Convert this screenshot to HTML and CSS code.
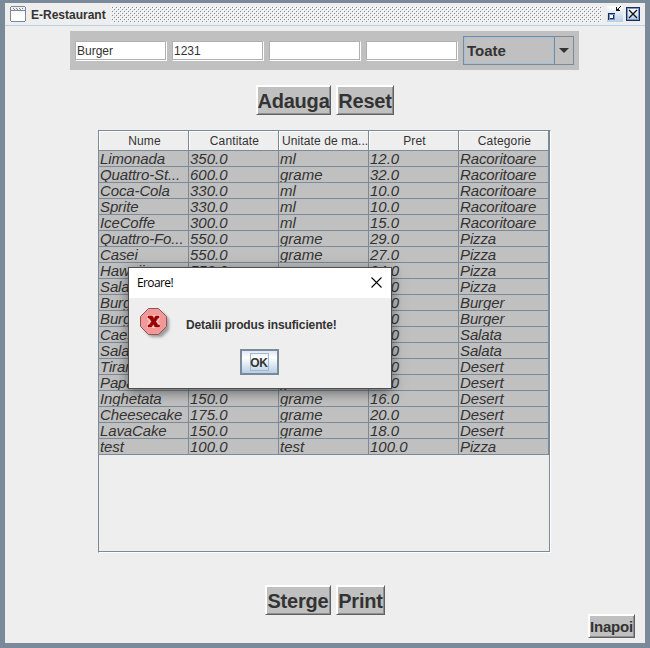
FILE: index.html
```html
<!DOCTYPE html>
<html lang="ro">
<head>
<meta charset="utf-8">
<title>E-Restaurant</title>
<link rel="stylesheet" href="styles.css">
</head>
<body>
<div class="window">
  <header class="titlebar">
    <svg class="app-icon" width="16" height="16" shape-rendering="crispEdges"><path fill="#7a8a99" d="M1 0h14v1h1v14h-1v1H1v-1H0V1h1z"/><path fill="#eee" d="M1 1h14v3H1z"/><path fill="#fff" d="M1 5h14v10H1z"/><path fill="#7a8a99" d="M3 2h1v1H3zM6 2h1v1H6zM9 2h1v1H9zM12 2h1v1h-1zM4 3h1v1H4zM7 3h1v1H7zM10 3h1v1h-1z"/></svg>
    <h1>E-Restaurant</h1>
    <svg class="bumps" width="491" height="17" shape-rendering="crispEdges"><defs><pattern id="bump" width="4" height="4" patternUnits="userSpaceOnUse"><path fill="#fff" d="M0 0h1v1H0zM2 2h1v1H2z"/><path fill="#7a8a99" d="M1 1h1v1H1zM3 3h1v1H3z"/></pattern></defs><rect width="491" height="17" fill="url(#bump)"/></svg>
    <svg class="win-icons" width="34" height="16" shape-rendering="crispEdges"><defs><linearGradient id="ice" x2="0" y2="1"><stop stop-color="#fff"/><stop offset="1" stop-color="#b8cfe5"/></linearGradient></defs><path fill="url(#ice)" d="M0 0h16v16H0z"/><path fill="#1b2b57" d="M1 7h7v7H1z"/><path fill="#7a96d0" d="M2 8h6v6H2z"/><path fill="#1b2b57" d="M3 9h4v4H3z"/><path fill="#fff" d="M3 9h3v3H3z"/><path fill="#111" d="M9 1h1v4H9zM9 4h4v1H9zM10 3h2v1h-2zM11 2h1v1h-1zM12 1h1v1h-1zM13 0h1v1h-1z"/><path fill="#1b2b57" d="M19 1h14v14H19z"/><path fill="#7a96d0" d="M20 2h12v12H20z"/><path fill="url(#ice)" d="M21 3h10v10H21z"/><path d="M22 4l8 8M30 4l-8 8" stroke="#111" stroke-width="1.3" shape-rendering="auto"/></svg>
  </header>
  <main>
    <section class="form">
      <div class="field">Burger</div><div class="field">1231</div><div class="field"></div><div class="field"></div>
      <div class="combo"><span>Toate</span><i><svg width="10" height="5"><path d="M0 0h10L5 5z" fill="#333"/></svg></i></div>
    </section>
    <div class="actions"><button class="adauga">Adauga</button><button class="reset">Reset</button></div>
    <div class="scroll">
      <table>
        <thead><tr><th>Nume</th><th>Cantitate</th><th class="unit">Unitate de ma...</th><th>Pret</th><th>Categorie</th></tr></thead>
        <tbody>
          <tr><td>Limonada</td><td>350.0</td><td>ml</td><td>12.0</td><td>Racoritoare</td></tr>
          <tr><td>Quattro-St...</td><td>600.0</td><td>grame</td><td>32.0</td><td>Racoritoare</td></tr>
          <tr><td>Coca-Cola</td><td>330.0</td><td>ml</td><td>10.0</td><td>Racoritoare</td></tr>
          <tr><td>Sprite</td><td>330.0</td><td>ml</td><td>10.0</td><td>Racoritoare</td></tr>
          <tr><td>IceCoffe</td><td>300.0</td><td>ml</td><td>15.0</td><td>Racoritoare</td></tr>
          <tr><td>Quattro-Fo...</td><td>550.0</td><td>grame</td><td>29.0</td><td>Pizza</td></tr>
          <tr><td>Casei</td><td>550.0</td><td>grame</td><td>27.0</td><td>Pizza</td></tr>
          <tr><td>Hawaii</td><td>550.0</td><td>grame</td><td>24.0</td><td>Pizza</td></tr>
          <tr><td>Salami</td><td>550.0</td><td>grame</td><td>25.0</td><td>Pizza</td></tr>
          <tr><td>Burger</td><td>350.0</td><td>grame</td><td>20.0</td><td>Burger</td></tr>
          <tr><td>Burger</td><td>350.0</td><td>grame</td><td>20.0</td><td>Burger</td></tr>
          <tr><td>Caesar</td><td>300.0</td><td>grame</td><td>20.0</td><td>Salata</td></tr>
          <tr><td>Salata</td><td>300.0</td><td>grame</td><td>20.0</td><td>Salata</td></tr>
          <tr><td>Tiramisu</td><td>150.0</td><td>grame</td><td>20.0</td><td>Desert</td></tr>
          <tr><td>Papanasi</td><td>150.0</td><td>grame</td><td>20.0</td><td>Desert</td></tr>
          <tr><td>Inghetata</td><td>150.0</td><td>grame</td><td>16.0</td><td>Desert</td></tr>
          <tr><td>Cheesecake</td><td>175.0</td><td>grame</td><td>20.0</td><td>Desert</td></tr>
          <tr><td>LavaCake</td><td>150.0</td><td>grame</td><td>18.0</td><td>Desert</td></tr>
          <tr><td>test</td><td>100.0</td><td>test</td><td>100.0</td><td>Pizza</td></tr>
        </tbody>
      </table>
    </div>
    <div class="actions bottom"><button class="sterge">Sterge</button><button class="print">Print</button></div>
    <button class="inapoi">Inapoi</button>
  </main>
</div>
<div class="dialog" role="dialog">
  <div class="dialog-title"><span>Eroare!</span><svg width="11" height="11"><path d="M.5.5l10 10M10.500.5l-10 10" stroke="#000" stroke-width="1.1"/></svg></div>
  <div class="dialog-body">
    <div class="message">
      <svg class="error-icon" width="34" height="34"><defs><filter id="soft" x="-20%" y="-20%" width="150%" height="150%"><feGaussianBlur stdDeviation="1.4"/></filter></defs><path d="M11 4h11l7 7v11l-7 7H11l-7-7V11z" fill="#777" opacity=".7" filter="url(#soft)"/><path d="M8.500.5h10l8 8v10l-8 8h-10l-8-8v-10z" fill="#f19999" stroke="#925454"/><path d="M7 7h13v4l-2 2.500 2 2.500v4H7v-4l2-2.500L7 11z" fill="#ffc0c0"/><path d="M8 8h4.500l1.500 2.800L15.500 8H19v2h-1l-2.300 3.500L18 17h1.500v2H15l-1.700-3-1.800 3H8v-2h1.200l2.300-3.500L9.200 10H8z" fill="#900" stroke="#900" stroke-width=".5"/></svg>
      <p>Detalii produs insuficiente!</p>
    </div>
    <button class="ok"><span>OK</span></button>
  </div>
</div>
</body>
</html>
```
FILE: styles.css
```css
* { box-sizing: border-box; }
body { margin: 0; width: 650px; height: 648px; overflow: hidden; font: 12px "Liberation Sans", Arial, sans-serif; color: #333; }
svg { display: block; flex: none; }
.window { height: 648px; background: #eee; border: solid #7a8a99; border-width: 3px 5px 5px; display: flex; flex-direction: column; }
.titlebar { height: 23px; border-bottom: 1px solid #b8cfe5; display: flex; align-items: flex-start; padding: 3px 0 0 5px; flex: none; }
h1 { margin: 0 0 0 5px; width: 79px; flex: none; font-size: 12px; line-height: 18px; white-space: nowrap; }
.bumps { margin-left: 1px; }
.win-icons { margin-left: 5px; }
main { flex: 1; padding-top: 5px; display: flex; flex-direction: column; align-items: center; }
.form { width: 509px; height: 39px; margin-left: -1px; background: #c0c0c0; padding: 5px; display: flex; align-items: center; gap: 5px; }
.field { width: 92px; height: 20px; background: #fff; border: 1px solid #b0b0b0; border-right-color: #fff; border-bottom-color: #fff; box-shadow: inset -1px -1px #b0b0b0; padding: 0 1px; line-height: 19px; font-size: 12px; }
.combo { width: 111px; height: 29px; border: 1px solid #7a8a99; display: flex; font: bold 15px/27px "Liberation Sans", sans-serif; }
.combo span { flex: 1; border: 1px solid #a3c0dc; padding-left: 2px; line-height: 26px; }
.combo i { width: 19px; border-left: 1px solid #7a8a99; display: flex; align-items: center; justify-content: center; }
button { font: bold 20px "Liberation Sans", sans-serif; letter-spacing: -.2px; color: #333; background: #c0c0c0; border: 1px solid; border-color: #fff #606060 #606060 #fff; box-shadow: inset 1px 1px #fff, inset -1px -1px #909090; padding: 0; height: 30px; line-height: 30px; white-space: nowrap; display: flex; justify-content: center; }
.actions { display: flex; gap: 5px; margin-top: 15px; }
.adauga { width: 75px; }
.reset { width: 58px; }
.scroll { width: 453px; height: 423px; margin: 15px 1px 0 0; border: 1px solid #7a8a99; border-right-color: #fff; border-bottom-color: #fff; box-shadow: inset -1px -1px #7a8a99; }
table { width: 450px; table-layout: fixed; border-collapse: separate; border-spacing: 0; }
th, td { padding: 0; border: solid #7a8a99; border-width: 0 1px 1px 0; white-space: nowrap; overflow: hidden; }
th { height: 20px; font-weight: normal; font-size: 12px; line-height: 17px; letter-spacing: .15px; box-shadow: inset 1px 1px #fff; padding: 2px 0 0 2px; }
th.unit { text-align: left; padding-left: 3px; letter-spacing: .1px; }
td { height: 16px; background: #c0c0c0; font-style: italic; font-size: 15px; line-height: 15px; padding-left: 1px; }
td:first-child, td:last-child { letter-spacing: -.12px; }
.bottom { margin-top: 32px; }
.sterge { width: 66px; }
.print { width: 49px; }
.inapoi { align-self: flex-end; width: 47px; height: 24px; margin: -1px 10px 0 0; font-size: 15px; line-height: 24px; }
.dialog { position: absolute; left: 128px; top: 267px; width: 264px; height: 122px; border: 1px solid #4d4d4d; background: #eee; box-shadow: 0 3px 12px rgba(0,0,0,.5); }
.dialog-title { height: 30px; background: #fff; color: #000; padding: 0 9px 2px 8px; display: flex; align-items: center; justify-content: space-between; font: 12px "Open Sans", "Noto Sans", sans-serif; }
.dialog-title span { letter-spacing: -.6px; }
.dialog-body { height: 90px; padding: 10px 2px 0 0; display: flex; flex-direction: column; align-items: center; }
.message { width: 100%; display: flex; padding-left: 11px; height: 41px; }
.message p { margin: 10px 0 0 12px; font-weight: bold; line-height: 15px; letter-spacing: -.12px; }
.ok { width: 39px; height: 26px; border: 2px solid #7a8a99; box-shadow: none; background: linear-gradient(#dde8f3, #fff 30%, #b8cfe5); font-size: 12px; align-items: center; }
.ok span { border: 1px solid #a3b8cc; width: 19px; height: 18px; line-height: 18px; display: flex; justify-content: center; }
```
